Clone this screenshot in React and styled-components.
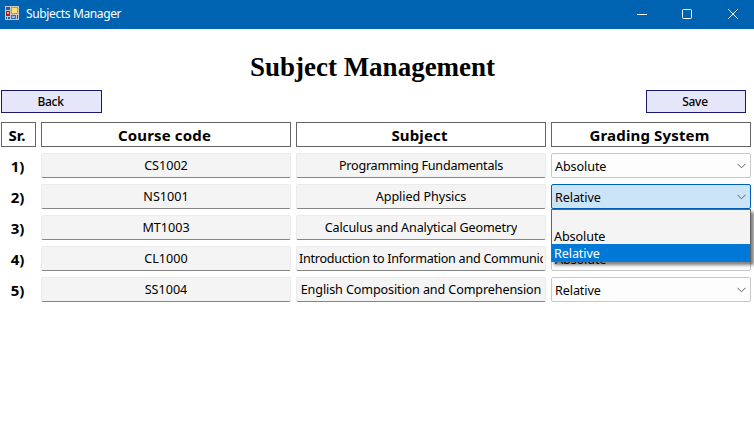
import React from "react";
import styled, { createGlobalStyle } from "styled-components";

const Global = createGlobalStyle`
  *, *::before, *::after { box-sizing: border-box; }
  body { margin: 0; background: #fff; overflow: hidden; }
`;

const Window = styled.div`
  width: 754px;
  height: 437px;
  background: #fff;
  color: #000;
  font: 12.6px/17px "Noto Sans", sans-serif;
  overflow: hidden;
`;

const TitleBar = styled.header`
  display: flex;
  align-items: center;
  height: 29px;
  padding-left: 5px;
  padding-bottom: 2px;
  background: #0063b1;
  color: #fff;
`;

const AppIcon = styled.svg`
  width: 14px;
  height: 14px;
  margin-top: -1px;
  flex: none;
`;

const Caption = styled.span`
  flex: 1;
  margin: 1px 0 0 7px;
  font-size: 12px;
  line-height: 16px;
  letter-spacing: -0.37px;
`;

const WindowButton = styled.button`
  display: flex;
  align-items: center;
  justify-content: center;
  width: 45px;
  height: 27px;
  padding: 0;
  border: 0;
  background: transparent;

  &:last-child { margin-right: -1px; padding-left: 1px; width: 46px; }
`;

const Heading = styled.h1`
  margin: 0;
  height: 61px;
  padding: 22px 9px 0 0;
  text-align: center;
  font: bold 27px/32px "Liberation Serif", serif;
`;

const Actions = styled.div`
  display: flex;
  justify-content: space-between;
  padding: 0 8px 0 1px;
`;

const ActionButton = styled.button`
  width: ${(p) => p.$width}px;
  height: 23px;
  padding: 0 2px 0 0;
  border: 1px solid #191970;
  background: #e6e6fa;
  color: #000;
  font: 500 12px/20px "Noto Sans", sans-serif;
  letter-spacing: -0.3px;
`;

const Table = styled.div`
  display: grid;
  grid-template-columns: 35px 250px 250px 200px;
  column-gap: 5px;
  row-gap: 6px;
  grid-auto-rows: 25px;
  margin: 9px 0 0 1px;
`;

const HeaderCell = styled.div`
  border: 1px solid #646464;
  padding-right: 3px;
  text-align: center;
  font-size: 15px;
  font-weight: 700;
  line-height: 24px;
  letter-spacing: 0.15px;
`;

const RowNumber = styled.div`
  padding-top: 1px;
  padding-right: 2px;
  text-align: center;
  font-size: 15px;
  font-weight: 700;
  line-height: 25px;
`;

const TextField = styled.div`
  display: flex;
  justify-content: ${(p) => (p.$overflow ? "flex-start" : "center")};
  padding: 0 2px;
  border: 1px solid #ebebeb;
  border-bottom-color: #868686;
  border-radius: 2px;
  background: #f4f4f4;
  line-height: 23px;
`;

const FieldText = styled.span`
  overflow: hidden;
  white-space: nowrap;
  letter-spacing: ${(p) => p.$spacing || 0}px;
`;

const Combo = styled.div`
  position: relative;
  display: flex;
  align-items: center;
  justify-content: space-between;
  padding: 1px 4px 0 3px;
  border: 1px solid ${(p) => (p.$open ? "#005fb8" : "#c8c8c8")};
  border-radius: 2px;
  background: ${(p) => (p.$open ? "#cce4f7" : "#fdfdfd")};
  letter-spacing: -0.1px;
`;

const Menu = styled.div`
  position: absolute;
  z-index: 1;
  top: 24px;
  left: -1px;
  width: 200px;
  border: 1px solid #646464;
  background: #f4f4f4;
  box-shadow: 3px 3px 3px rgba(0, 0, 0, 0.5);
`;

const Option = styled.div`
  height: 17px;
  padding-left: 2px;
  line-height: 19px;
  background: ${(p) => (p.$selected ? "#0078d7" : "transparent")};
  color: ${(p) => (p.$selected ? "#fff" : "#000")};
`;

const Chevron = () => (
  <svg width="9" height="6" viewBox="0 0 9 6" fill="none" stroke="#606060">
    <path d="M0.5 0.8 4.5 4.8 8.5 0.8" />
  </svg>
);

const choices = ["", "Absolute", "Relative"];

const courses = [
  { code: "CS1002", subject: "Programming Fundamentals", grading: "Absolute", spacing: -0.25 },
  { code: "NS1001", subject: "Applied Physics", grading: "Relative", spacing: -0.05, open: true },
  { code: "MT1003", subject: "Calculus and Analytical Geometry", grading: "Absolute", spacing: -0.15 },
  { code: "CL1000", subject: "Introduction to Information and Communication", grading: "Absolute", spacing: -0.27, overflow: true },
  { code: "SS1004", subject: "English Composition and Comprehension", grading: "Relative", spacing: -0.12 },
];

function GradingSelect({ value, open }) {
  return (
    <Combo $open={open}>
      <span>{value}</span>
      <Chevron />
      {open && (
        <Menu>
          {choices.map((c) => (
            <Option key={c} $selected={c === value}>{c}</Option>
          ))}
        </Menu>
      )}
    </Combo>
  );
}

export default function App() {
  return (
    <Window>
      <Global />
      <TitleBar>
        <AppIcon viewBox="0 0 14 14" shapeRendering="crispEdges">
          <path fill="#c8c8c4" d="M0 0h14v14H0z" />
          <path fill="#245c9c" d="M1 1h4v3H1zM1 11h1v2H1zM3 11h2v2H3zM12 9h1v4h-1z" />
          <path fill="#b02020" d="M1 5h4v5H1z" />
          <path fill="#f0a090" d="M2 6h2v2H2z" />
          <path fill="#d89818" d="M6 1h7v7H6z" />
          <path fill="#ffe070" d="M7 2h5v5H7z" />
          <path fill="#3c6cc8" d="M6 9h5v4H6z" />
          <path fill="#90b8f0" d="M7 10h3v2H7z" />
        </AppIcon>
        <Caption>Subjects Manager</Caption>
        <WindowButton aria-label="Minimize">
          <svg width="10" height="10" stroke="#fff"><path d="M0 5.5h10" /></svg>
        </WindowButton>
        <WindowButton aria-label="Maximize">
          <svg width="10" height="10" fill="none" stroke="#fff"><rect x="0.5" y="0.5" width="9" height="9" rx="1" /></svg>
        </WindowButton>
        <WindowButton aria-label="Close">
          <svg width="10" height="10" stroke="#fff"><path d="M0.3 0.3l9.4 9.4M9.7 0.3L0.3 9.7" /></svg>
        </WindowButton>
      </TitleBar>
      <Heading>Subject Management</Heading>
      <Actions>
        <ActionButton $width={101}>Back</ActionButton>
        <ActionButton $width={100}>Save</ActionButton>
      </Actions>
      <Table>
        <HeaderCell>Sr.</HeaderCell>
        <HeaderCell>Course code</HeaderCell>
        <HeaderCell>Subject</HeaderCell>
        <HeaderCell>Grading System</HeaderCell>
        {courses.map((c, i) => (
          <React.Fragment key={c.code}>
            <RowNumber>{i + 1})</RowNumber>
            <TextField><FieldText>{c.code}</FieldText></TextField>
            <TextField $overflow={c.overflow}>
              <FieldText $spacing={c.spacing}>{c.subject}</FieldText>
            </TextField>
            <GradingSelect value={c.grading} open={c.open} />
          </React.Fragment>
        ))}
      </Table>
    </Window>
  );
}
